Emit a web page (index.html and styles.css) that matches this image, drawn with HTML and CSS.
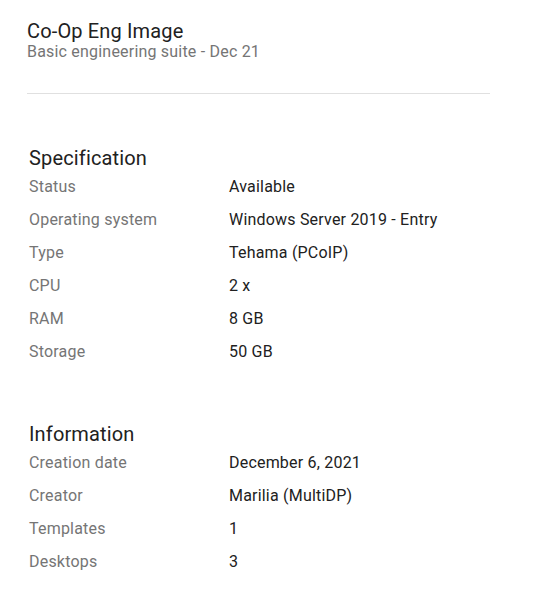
FILE: index.html
```html
<!DOCTYPE html>
<html lang="en">
<head>
    <meta charset="UTF-8">
    <meta name="viewport" content="width=device-width, initial-scale=1.0">
    <title>Co-Op Eng Image</title>
    <link rel="stylesheet" href="styles.css">
</head>
<body>
    <main class="detalle">
        <header class="cabecera">
            <h1 class="titulo">Co-Op Eng Image</h1>
            <p class="subtitulo">Basic engineering suite - Dec 21</p>
        </header>

        <section class="bloque">
            <h2 class="bloque-titulo">Specification</h2>
            <dl class="lista">
                <dt>Status</dt><dd>Available</dd>
                <dt>Operating system</dt><dd>Windows Server 2019 - Entry</dd>
                <dt>Type</dt><dd>Tehama (PCoIP)</dd>
                <dt>CPU</dt><dd>2 x</dd>
                <dt>RAM</dt><dd>8 GB</dd>
                <dt>Storage</dt><dd>50 GB</dd>
            </dl>
        </section>

        <section class="bloque">
            <h2 class="bloque-titulo">Information</h2>
            <dl class="lista">
                <dt>Creation date</dt><dd>December 6, 2021</dd>
                <dt>Creator</dt><dd>Marilia (MultiDP)</dd>
                <dt>Templates</dt><dd>1</dd>
                <dt>Desktops</dt><dd>3</dd>
            </dl>
        </section>
    </main>
</body>
</html>
```

FILE: styles.css
```css
body {
    margin: 0;
    background-color: #fff;
    color: #212121;
    font-family: Roboto, "Liberation Sans", sans-serif;
}

.detalle {
    width: 463px;
    padding: 19px 0 0 27px;
}

.cabecera {
    padding-bottom: 32px;
    border-bottom: 1px solid #e0e0e0;
}

.titulo {
    margin: 0;
    font-size: 20px;
    font-weight: 400;
    line-height: 24px;
    letter-spacing: 0.15px;
}

.subtitulo {
    margin: 0;
    font-size: 16px;
    line-height: 18px;
    letter-spacing: 0.2px;
    color: #757575;
}

.bloque {
    padding-left: 2px;
    margin-top: 52px;
}

.bloque + .bloque {
    margin-top: 54px;
}

.bloque-titulo {
    margin: 0;
    font-size: 20px;
    font-weight: 400;
    line-height: 24px;
    letter-spacing: 0.15px;
}

.lista {
    display: grid;
    grid-template-columns: 200px 1fr;
    grid-auto-rows: 33px;
    margin: 0;
    font-size: 16px;
    line-height: 33px;
    letter-spacing: 0.2px;
}

.lista dt {
    color: #757575;
}

.lista dd {
    margin: 0;
}
```
